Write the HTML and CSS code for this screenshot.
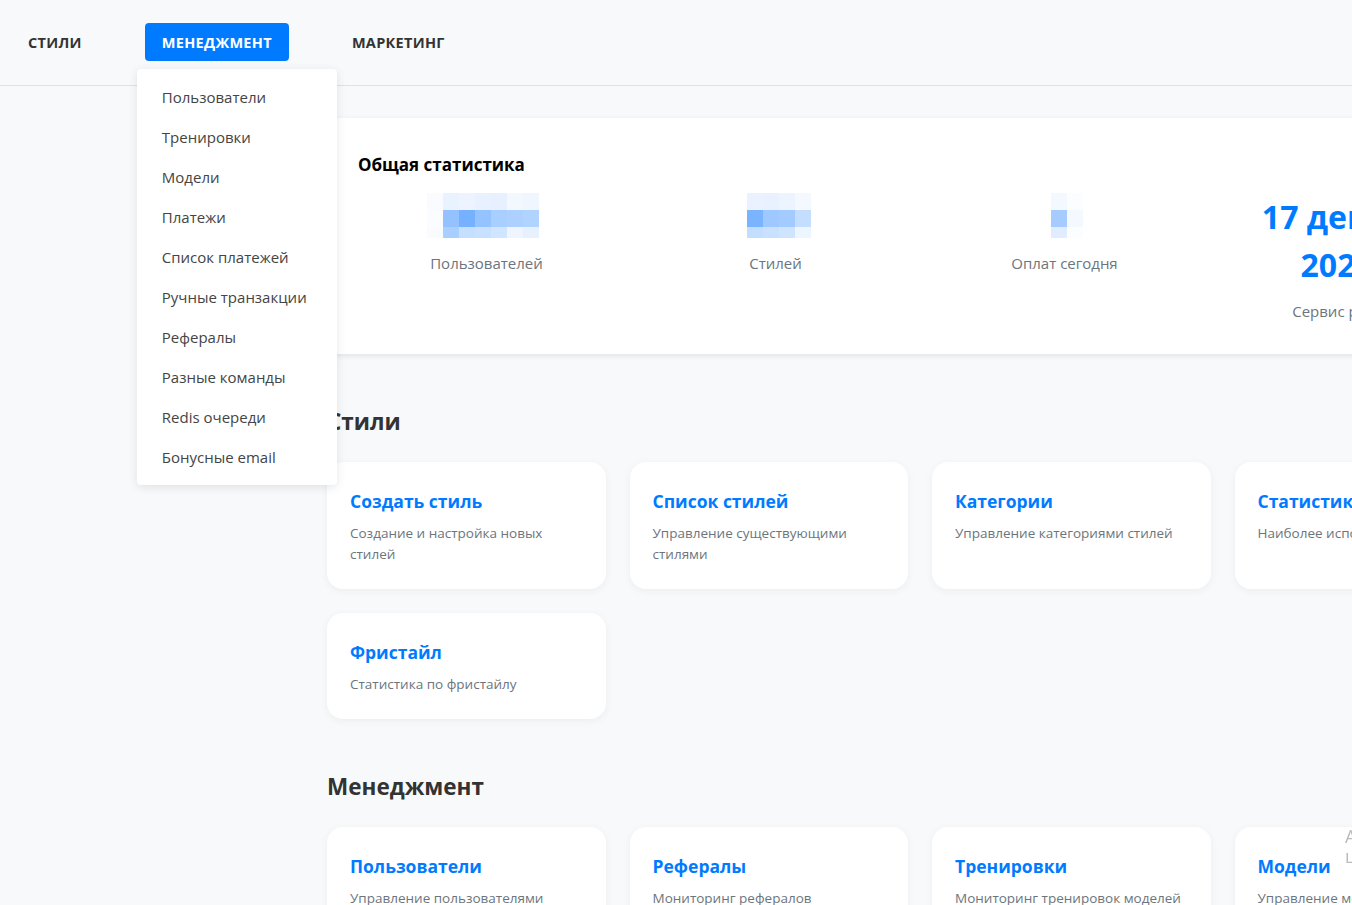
FILE: index.html
```html
<!DOCTYPE html>
<html lang="ru">
<head>
<meta charset="utf-8">
<title>Админ-панель</title>
<link rel="stylesheet" href="styles.css">
</head>
<body>
<header class="topbar">
  <nav class="nav">
    <div class="nav-item">Стили</div>
    <div class="nav-item nav-item--active">
      Менеджмент
      <ul class="dropdown">
        <li>Пользователи</li>
        <li>Тренировки</li>
        <li>Модели</li>
        <li>Платежи</li>
        <li>Список платежей</li>
        <li>Ручные транзакции</li>
        <li>Рефералы</li>
        <li>Разные команды</li>
        <li>Redis очереди</li>
        <li>Бонусные email</li>
      </ul>
    </div>
    <div class="nav-item">Маркетинг</div>
  </nav>
</header>

<main class="main">
  <section class="stats-card">
    <h5 class="stats-title">Общая статистика</h5>
    <div class="stats-row">
      <div class="stat">
        <div class="stat-value">
          <div class="pix pix--7">
            <i style="background:#fafbff"></i><i style="background:#e9f2ff"></i><i style="background:#eef4ff"></i><i style="background:#e8f1ff"></i><i style="background:#e6f0ff"></i><i style="background:#f3f8ff"></i><i style="background:#f0f6ff"></i>
            <i style="background:#fbfcff"></i><i style="background:#93c2ff"></i><i style="background:#75b1ff"></i><i style="background:#95c3ff"></i><i style="background:#a8cfff"></i><i style="background:#acd0ff"></i><i style="background:#b0d3ff"></i>
            <i style="background:#fafbff"></i><i style="background:#a9cfff"></i><i style="background:#c5dfff"></i><i style="background:#c8e1ff"></i><i style="background:#d0e5ff"></i><i style="background:#eef5ff"></i><i style="background:#e6f0ff"></i>
          </div>
        </div>
        <div class="stat-label">Пользователей</div>
      </div>
      <div class="stat">
        <div class="stat-value">
          <div class="pix pix--4">
            <i style="background:#eaf2ff"></i><i style="background:#e8f1ff"></i><i style="background:#ecf4ff"></i><i style="background:#f4f8ff"></i>
            <i style="background:#7ab4ff"></i><i style="background:#9ec8ff"></i><i style="background:#a3cbff"></i><i style="background:#c4deff"></i>
            <i style="background:#c3ddff"></i><i style="background:#c9e1ff"></i><i style="background:#cfe4ff"></i><i style="background:#edf5ff"></i>
          </div>
        </div>
        <div class="stat-label">Стилей</div>
      </div>
      <div class="stat">
        <div class="stat-value">
          <div class="pix pix--2">
            <i style="background:#f4f8ff"></i><i style="background:#fbfdff"></i>
            <i style="background:#a6cbff"></i><i style="background:#f4f9ff"></i>
            <i style="background:#e1edff"></i><i style="background:#fbfdff"></i>
          </div>
        </div>
        <div class="stat-label">Оплат сегодня</div>
      </div>
      <div class="stat">
        <div class="stat-value stat-value--text">17 декабря<br>2025 г.</div>
        <div class="stat-label">Сервис работает</div>
      </div>
    </div>
  </section>

  <section class="section">
    <h2 class="section-title">Стили</h2>
    <div class="card-grid">
      <a class="tile"><h3 class="tile-title">Создать стиль</h3><p class="tile-text">Создание и настройка новых стилей</p></a>
      <a class="tile"><h3 class="tile-title">Список стилей</h3><p class="tile-text">Управление существующими стилями</p></a>
      <a class="tile"><h3 class="tile-title">Категории</h3><p class="tile-text">Управление категориями стилей</p></a>
      <a class="tile"><h3 class="tile-title">Статистика</h3><p class="tile-text">Наиболее используемые стили</p></a>
      <a class="tile"><h3 class="tile-title">Фристайл</h3><p class="tile-text">Статистика по фристайлу</p></a>
    </div>
  </section>

  <section class="section">
    <h2 class="section-title">Менеджмент</h2>
    <div class="card-grid">
      <a class="tile"><h3 class="tile-title">Пользователи</h3><p class="tile-text">Управление пользователями</p></a>
      <a class="tile"><h3 class="tile-title">Рефералы</h3><p class="tile-text">Мониторинг рефералов</p></a>
      <a class="tile"><h3 class="tile-title">Тренировки</h3><p class="tile-text">Мониторинг тренировок моделей</p></a>
      <a class="tile"><h3 class="tile-title">Модели</h3><p class="tile-text">Управление моделями</p></a>
    </div>
  </section>
</main>
<div class="float-hint">А<br>ц</div>
</body>
</html>
```
FILE: styles.css
```css
html, body {
  margin: 0;
  padding: 0;
  overflow: hidden;
  height: 905px;
}
body {
  background: #f8f9fa;
  font-family: "Open Sans", "Noto Sans", sans-serif;
  color: #333;
}
* { box-sizing: border-box; }

.topbar {
  height: 86px;
  border-bottom: 1px solid #dee2e6;
  padding: 23px 0 0 11px;
}
.nav {
  display: flex;
  gap: 46px;
}
.nav-item {
  position: relative;
  height: 38px;
  padding: 0 17px;
  display: flex;
  align-items: center;
  font-size: 14.5px;
  font-weight: 700;
  letter-spacing: 0.3px;
  text-transform: uppercase;
  color: #333;
  border-radius: 4px;
}
.nav-item--active {
  background: #007bff;
  color: #fff;
}
.dropdown {
  position: absolute;
  top: 46px;
  left: -8px;
  width: 200px;
  margin: 0;
  padding: 8px 0;
  list-style: none;
  background: #fff;
  border-radius: 4px;
  box-shadow: 0 2px 10px rgba(0, 0, 0, 0.1);
  z-index: 10;
}
.dropdown li {
  height: 40px;
  line-height: 40px;
  padding-left: 25px;
  font-size: 15px;
  font-weight: 400;
  letter-spacing: 0;
  text-transform: none;
  color: #444;
}

.main {
  margin-left: 327px;
  width: 1186px;
  padding-top: 32px;
}
.stats-card {
  background: #fff;
  padding: 35px 15px 32px;
  box-shadow: 0 2px 6px rgba(0, 0, 0, 0.09);
}
.stats-title {
  margin: 0 0 17px 16px;
  font-size: 17px;
  line-height: 23px;
  font-weight: 700;
  color: #000;
}
.stats-row {
  display: grid;
  grid-template-columns: repeat(4, 1fr);
}
.stat {
  text-align: center;
}
.stat-value {
  min-height: 48px;
  display: flex;
  justify-content: center;
}
.stat-value--text {
  display: block;
  font-size: 32px;
  line-height: 48px;
  font-weight: 700;
  color: #007bff;
  white-space: nowrap;
}
.pix {
  display: grid;
  grid-template-rows: 17px 17px 11px;
}
.pix--7 { grid-template-columns: repeat(7, 16px); margin-left: -8px; }
.pix--4 { grid-template-columns: repeat(4, 16px); margin-left: 6px; }
.pix--2 { grid-template-columns: repeat(2, 16px); margin-left: 4px; }
.pix i { display: block; }
.stat-label {
  margin-top: 11px;
  font-size: 15px;
  line-height: 22px;
  color: #6c757d;
}

.section {
  margin-top: 54px;
}
.section-title {
  margin: 0 0 26px;
  font-size: 22.5px;
  line-height: 28px;
  font-weight: 700;
  color: #333;
}
.card-grid {
  display: grid;
  grid-template-columns: repeat(4, 1fr);
  gap: 24px;
}
.tile {
  display: block;
  background: #fff;
  border-radius: 16px;
  padding: 25px 23px 24px;
  box-shadow: 0 2px 8px rgba(0, 0, 0, 0.05);
}
.tile-title {
  margin: 0;
  font-size: 17.5px;
  line-height: 28px;
  font-weight: 700;
  color: #007bff;
}
.tile-text {
  margin: 8px 0 0;
  font-size: 13.5px;
  line-height: 21px;
  color: #6c757d;
}
.float-hint {
  position: fixed;
  left: 1345px;
  top: 826px;
  font-size: 18px;
  line-height: 20px;
  color: #bbb;
}
```
